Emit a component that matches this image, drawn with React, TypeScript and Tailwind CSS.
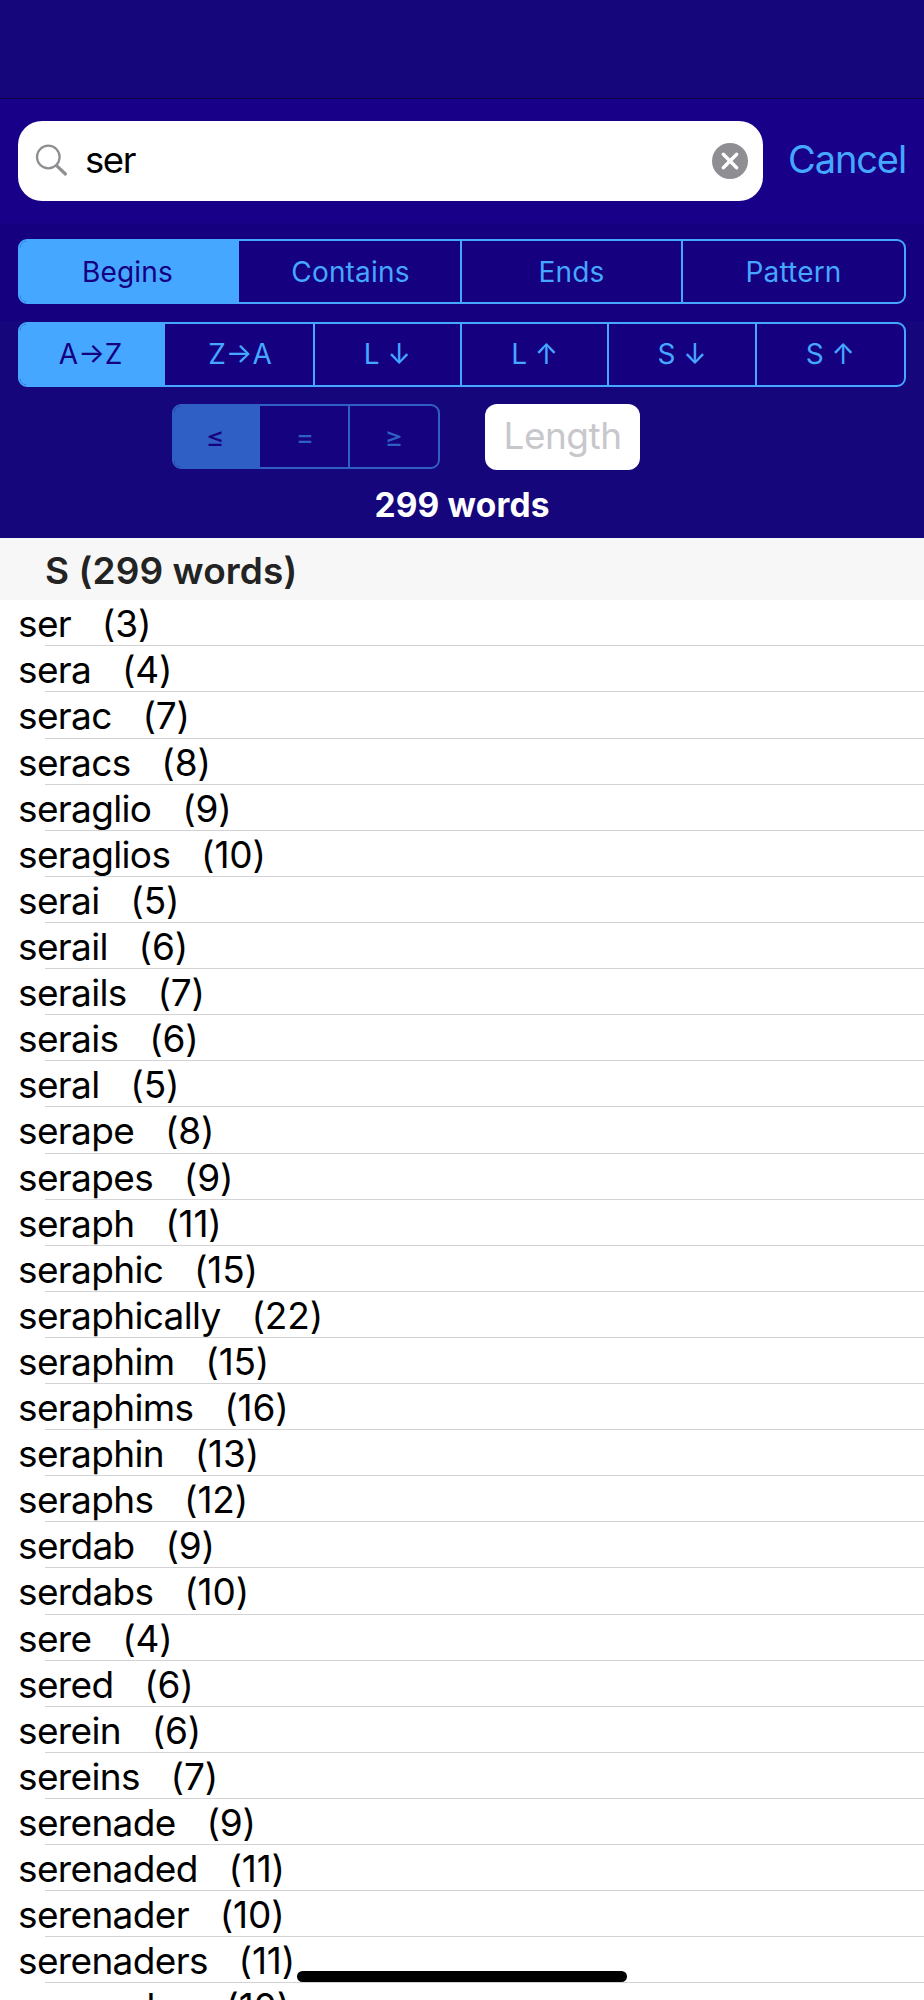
type Entry = [word: string, points: number];

const ENTRIES: Entry[] = [
  ["ser", 3],
  ["sera", 4],
  ["serac", 7],
  ["seracs", 8],
  ["seraglio", 9],
  ["seraglios", 10],
  ["serai", 5],
  ["serail", 6],
  ["serails", 7],
  ["serais", 6],
  ["seral", 5],
  ["serape", 8],
  ["serapes", 9],
  ["seraph", 11],
  ["seraphic", 15],
  ["seraphically", 22],
  ["seraphim", 15],
  ["seraphims", 16],
  ["seraphin", 13],
  ["seraphs", 12],
  ["serdab", 9],
  ["serdabs", 10],
  ["sere", 4],
  ["sered", 6],
  ["serein", 6],
  ["sereins", 7],
  ["serenade", 9],
  ["serenaded", 11],
  ["serenader", 10],
  ["serenaders", 11],
  ["serenades", 10],
];

function Segments({ labels, className, labelClass }: { labels: string[]; className: string; labelClass: string }) {
  return (
    <div
      role="group"
      className={`grid h-[65px] auto-cols-fr grid-flow-col overflow-hidden rounded-[9px] border-2 border-[#45a7ff] bg-[#150080] text-[#45a7ff] ${className}`}
    >
      {labels.map((label, i) => (
        <button
          key={label}
          className={`flex min-w-0 items-center justify-center whitespace-pre ${labelClass} ${
            i === 0 ? "mr-[2px] bg-[#45a7ff] pr-[4px] text-[#150080]" : ""
          } ${i > 0 && i < labels.length - 1 ? "border-r-2 border-[#45a7ff]" : ""}`}
        >
          {label}
        </button>
      ))}
    </div>
  );
}

function SearchIcon() {
  return (
    <svg width="34" height="34" viewBox="0 0 34 34" fill="none" stroke="#8e8e93" strokeLinecap="round">
      <circle cx="13.3" cy="13" r="11.3" strokeWidth="2.3" />
      <path d="M21.6 21.6 L30.4 30" strokeWidth="3.2" />
    </svg>
  );
}

function ClearIcon() {
  return (
    <svg width="36" height="36" viewBox="0 0 36 36" fill="none">
      <circle cx="18" cy="18" r="18" fill="#8e8e93" />
      <path d="M11.3 11.3 L24.7 24.7 M24.7 11.3 L11.3 24.7" stroke="#fff" strokeWidth="3.4" strokeLinecap="round" />
    </svg>
  );
}

export default function App() {
  return (
    <div className="relative flex h-[2000px] w-[924px] flex-col overflow-hidden bg-white font-[Inter,'Liberation_Sans',sans-serif] text-black">
      <div className="h-[99px] shrink-0 border-b border-[#0c0340] bg-[#16067c]" />

      <div className="flex h-[124px] shrink-0 items-start bg-[#180088] pt-[21.5px] pr-[18px] pl-[18px]">
        <div className="flex h-[80px] w-[745px] items-center rounded-[24px] bg-white pr-[15px] pl-[17px]">
          <SearchIcon />
          <span className="ml-[16px] flex-1 pb-[1px] text-[36.5px] leading-none tracking-[-1.4px]">ser</span>
          <ClearIcon />
        </div>
        <button className="ml-auto h-[80px] pb-[3px] text-[38px] leading-none tracking-[-1.1px] text-[#45a7ff]">Cancel</button>
      </div>

      <div className="h-[98px] shrink-0 bg-[#150080] px-[18px] pt-[16px]">
        <Segments
          labels={["Begins", "Contains", "Ends", "Pattern"]}
          className=""
          labelClass="text-[28px] tracking-[0.2px]"
        />
      </div>

      <div className="flex h-[216.5px] shrink-0 flex-col items-center bg-[#16067c] px-[18px] pt-[0.5px]">
        <Segments
          labels={["A→Z", "Z→A", "L ↓", "L ↑", "S ↓", "S ↑"]}
          className="w-full"
          labelClass="text-[28px]"
        />
        <div className="mt-[17.5px] flex w-full items-start pl-[154px]">
          <Segments labels={["≤", "=", "≥"]} className="w-[268px] opacity-[0.55]" labelClass="text-[28px]" />
          <div className="ml-[45px] flex h-[66px] w-[155px] items-center justify-center rounded-[12px] bg-white pb-[3px] text-[37px] leading-none tracking-[-0.5px] text-[#c7c7cc]">
            Length
          </div>
        </div>
        <p className="mt-[17px] text-[33.5px] leading-[36px] font-bold tracking-[0.15px] text-white">299 words</p>
      </div>

      <h2 className="flex h-[62.7px] shrink-0 items-center bg-[#f7f7f7] pt-[4px] pl-[45px] text-[37px] font-semibold tracking-[0.1px] text-[#232323]">
        S (299 words)
      </h2>

      <ul className="shrink-0">
        {ENTRIES.map(([word, points]) => (
          <li key={word} className="flex h-[46.11px] flex-col">
            <div className="h-[45.11px] pl-[18px] text-[37px] leading-[47px] whitespace-pre">
              <span className="tracking-[-0.65px]">{word}</span>
              <span className="tracking-[-0.15px]">{`   (${points})`}</span>
            </div>
            <div className="ml-[45px] h-px bg-[#d3d3d6]" />
          </li>
        ))}
      </ul>

      <div className="absolute top-[1971px] left-[297px] h-[11px] w-[330px] rounded-full bg-black" />
    </div>
  );
}
